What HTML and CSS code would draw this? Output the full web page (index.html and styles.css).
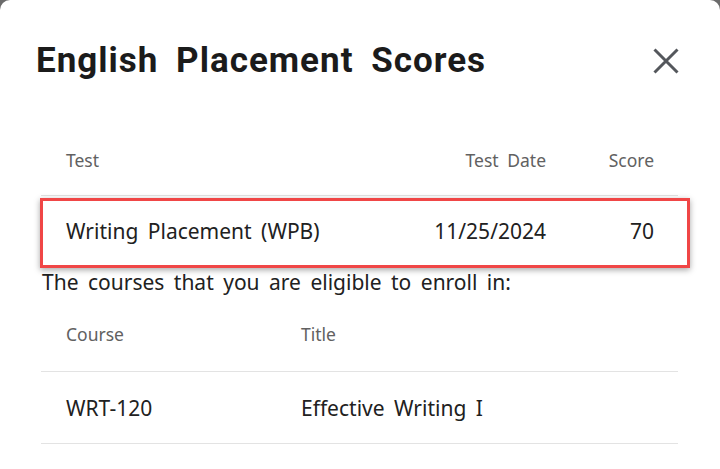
FILE: index.html
```html
<!DOCTYPE html>
<html lang="en">
  <head>
    <meta charset="UTF-8" />
    <meta name="viewport" content="width=device-width, initial-scale=1.0" />
    <title>English Placement Scores</title>
    <link rel="stylesheet" href="styles.css">
  </head>
  <body>
    <div class="dialog">
      <div class="dialog-head">
        <h1>English Placement Scores</h1>
        <button class="close" aria-label="Close">
          <svg width="28" height="28" viewBox="0 0 28 28">
            <path d="M2.5 2.5 25.5 25.5 M25.5 2.5 2.5 25.5" stroke="#54575c" stroke-width="3" fill="none" />
          </svg>
        </button>
      </div>
      <div class="grid scores">
        <div class="row head">
          <span>Test</span>
          <span class="num">Test Date</span>
          <span class="num">Score</span>
        </div>
        <div class="row marked">
          <span>Writing Placement (WPB)</span>
          <span class="num">11/25/2024</span>
          <span class="num">70</span>
        </div>
      </div>
      <p class="note">The courses that you are eligible to enroll in:</p>
      <div class="grid courses">
        <div class="row head">
          <span>Course</span>
          <span>Title</span>
        </div>
        <div class="row">
          <span>WRT-120</span>
          <span>Effective Writing I</span>
        </div>
      </div>
    </div>
  </body>
</html>
```

FILE: styles.css
```css
* {
  box-sizing: border-box;
}
html,
body {
  height: 100%;
  margin: 0;
}
body {
  background-color: #6b6b6b;
  font-family: "Noto Sans", sans-serif;
  color: #212121;
  word-spacing: 4px;
}
.dialog {
  background-color: #fff;
  min-height: 100%;
  border-radius: 10px 10px 0 0;
  padding: 0 42px 0 41px;
}
.dialog-head {
  height: 124px;
  display: flex;
  align-items: center;
  justify-content: space-between;
  padding-bottom: 3px;
}
.dialog-head h1 {
  margin: 0 0 0 -5px;
  font-family: Roboto, sans-serif;
  font-weight: 700;
  font-size: 35px;
  color: #1b1b1b;
  letter-spacing: 1px;
  word-spacing: 8px;
}
.close {
  border: 0;
  background: none;
  padding: 0;
  margin-right: -2px;
  display: flex;
  cursor: pointer;
}
.row {
  display: grid;
  align-items: center;
  border-bottom: 1px solid #e3e3e3;
  font-size: 21px;
  height: 72px;
}
.scores .row {
  grid-template-columns: 1fr auto 108px;
}
.courses .row {
  grid-template-columns: 235px 1fr;
}
.row span {
  padding: 0 24px 0 25px;
}
.row .num {
  text-align: right;
  padding-left: 0;
}
.row.head {
  font-size: 17.5px;
  color: #616161;
}
.scores .row.head {
  height: 72px;
}
.courses .row.head {
  height: 75px;
}
.row.marked {
  position: relative;
  border-bottom: 0;
  padding-bottom: 3px;
}
.row.marked::after {
  content: "";
  position: absolute;
  top: 2px;
  bottom: 0;
  left: -1px;
  right: -12px;
  border: 3px solid #f04646;
  box-shadow: 0 2px 6px rgb(0 0 0 / 35%);
}
.note {
  margin: 0 0 0 1px;
  font-size: 21px;
  line-height: 29px;
}
```
